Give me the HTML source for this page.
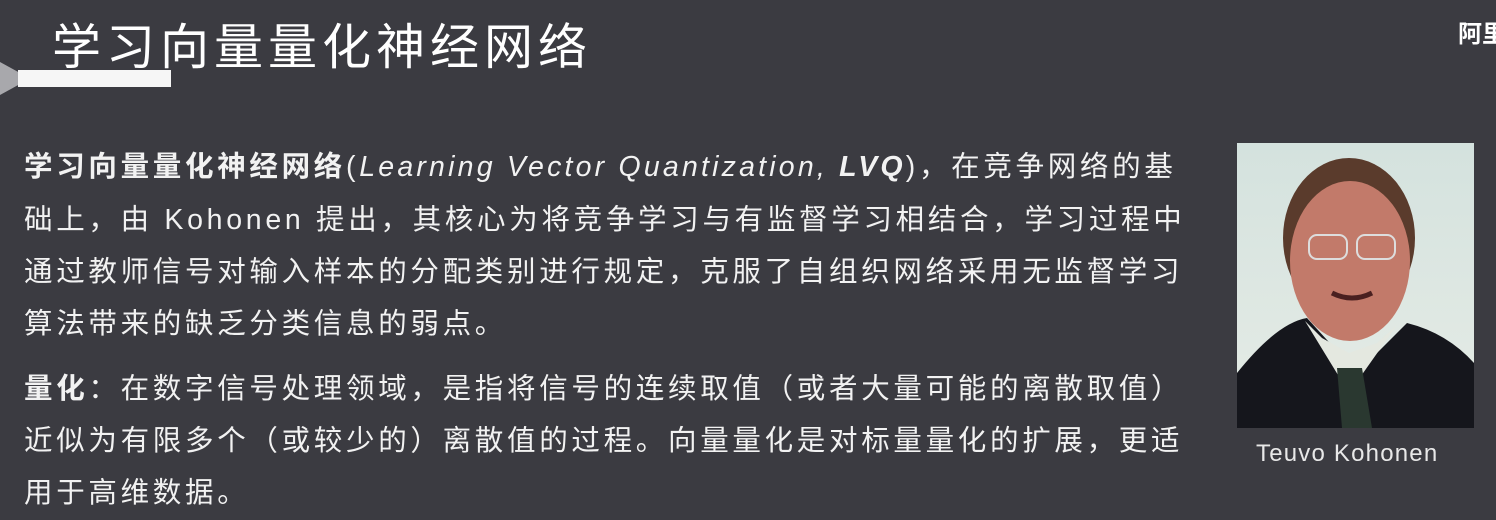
<!DOCTYPE html>
<html><head><meta charset="utf-8"><style>
body{margin:0;width:1496px;height:520px;background:#3b3b41;overflow:hidden;position:relative;font-family:"Liberation Sans","Noto Sans CJK SC",sans-serif;color:#f2f2f2}
.t{position:absolute;left:52px;top:8px;font-size:49px;letter-spacing:5px;color:#fff;white-space:nowrap}
.bar{position:absolute;left:18px;top:70px;width:153px;height:17px;background:#f6f6f6}
.wedge{position:absolute;left:0;top:62px;width:18px;height:33px;background:#a8a8ac;clip-path:polygon(0 0,100% 30%,100% 70%,0 100%)}
.p{position:absolute;left:24px;font-size:28.5px;letter-spacing:3.7px;line-height:52px;white-space:nowrap}
.p i{letter-spacing:3.2px}
.logo{position:absolute;left:1458px;top:14px;font-size:24px;font-weight:bold;color:#fff;white-space:nowrap}
.ph{position:absolute;left:1237px;top:143px;width:237px;height:285px;background:linear-gradient(#d4e2de,#e6ece6);overflow:hidden}
.cap{position:absolute;left:1256px;top:440px;font-size:24px;letter-spacing:1.2px;color:#e8e8e8;white-space:nowrap}
</style></head><body>
<div class="t">学习向量量化神经网络</div>
<div class="wedge"></div><div class="bar"></div>
<div class="logo">阿里</div>
<div class="p" style="top:141px"><b>学习向量量化神经网络</b>(<i>Learning Vector Quantization, <b>LVQ</b></i>)，在竞争网络的基</div>
<div class="p" style="top:194px">础上，由 Kohonen 提出，其核心为将竞争学习与有监督学习相结合，学习过程中</div>
<div class="p" style="top:246px">通过教师信号对输入样本的分配类别进行规定，克服了自组织网络采用无监督学习</div>
<div class="p" style="top:298px">算法带来的缺乏分类信息的弱点。</div>
<div class="p" style="top:363px"><b>量化</b>：在数字信号处理领域，是指将信号的连续取值（或者大量可能的离散取值）</div>
<div class="p" style="top:415px">近似为有限多个（或较少的）离散值的过程。向量量化是对标量量化的扩展，更适</div>
<div class="p" style="top:467px">用于高维数据。</div>
<div class="ph"><svg width="237" height="285">
<ellipse cx="112" cy="95" rx="66" ry="80" fill="#5a3b2c"/>
<ellipse cx="113" cy="118" rx="60" ry="80" fill="#c27a6a"/>
<path d="M0 230 Q40 180 70 175 L120 230 L170 180 Q210 190 237 220 L237 285 L0 285Z" fill="#15161c"/>
<path d="M68 178 L112 250 L160 182 L140 200 L112 210 L85 195Z" fill="#e4e8e0"/>
<path d="M100 225 L125 225 L135 285 L105 285Z" fill="#2a3830"/>
<rect x="72" y="92" width="38" height="24" rx="8" fill="none" stroke="#ddd" stroke-width="2"/>
<rect x="120" y="92" width="38" height="24" rx="8" fill="none" stroke="#ddd" stroke-width="2"/>
<path d="M95 150 Q115 160 135 150" stroke="#4a2020" stroke-width="5" fill="none"/>
</svg></div>
<div class="cap">Teuvo Kohonen</div>
</body></html>
